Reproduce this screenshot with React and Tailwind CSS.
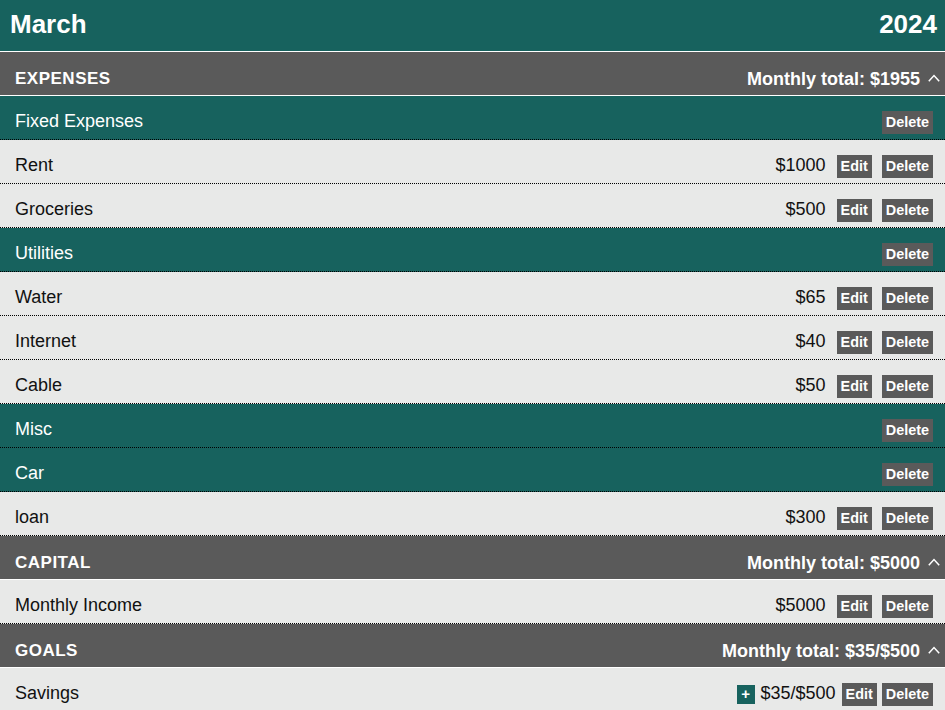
import React from 'react';

const font = "font-['Liberation_Sans',Arial,sans-serif]";

const expenses = [
  { name: 'Fixed Expenses', items: [{ name: 'Rent', amount: '$1000' }, { name: 'Groceries', amount: '$500' }] },
  {
    name: 'Utilities',
    items: [
      { name: 'Water', amount: '$65' },
      { name: 'Internet', amount: '$40' },
      { name: 'Cable', amount: '$50' },
    ],
  },
  { name: 'Misc', items: [] },
  { name: 'Car', items: [{ name: 'loan', amount: '$300' }] },
];

const Btn = ({ children }) => (
  <button className="bg-[#5a5a5a] text-white font-bold text-[14.4px] leading-[17px] px-1 pt-[3px] pb-[3px]">
    {children}
  </button>
);

const Chevron = () => (
  <svg width="12" height="8" viewBox="0 0 12 8" className="ml-[8px] mb-[4px]">
    <polyline points="0.8,7.2 6,1.5 11.2,7.2" fill="none" stroke="white" strokeWidth="1.5" />
  </svg>
);

const SectionHeader = ({ title, total }) => (
  <div className="flex justify-between items-baseline bg-[#5a5a5a] h-[44px] border-b border-white pl-[15px] pr-[5px] pt-[14px] text-white">
    <span className="font-bold text-[17px] tracking-[0.5px]">{title}</span>
    <span className="flex items-center font-bold text-[18px] leading-[21px] translate-y-[1px]">
      <span>Monthly total: {total}</span>
      <Chevron />
    </span>
  </div>
);

const GroupRow = ({ name }) => (
  <div className="flex justify-between items-baseline bg-[#17625e] h-[44px] border-b border-dotted border-black pl-[15px] pr-[12px] pt-[12px] text-white">
    <span className="text-[18px]">{name}</span>
    <Btn>Delete</Btn>
  </div>
);

const ItemRow = ({ name, amount, goal }) => (
  <div className="flex justify-between items-baseline bg-[#e8e9e8] h-[44px] border-b border-dotted border-black pl-[15px] pr-[12px] pt-[12px] text-[#111]">
    <span className="text-[18px]">{name}</span>
    {goal ? (
      <span className="flex items-baseline">
        <span className="bg-[#17625e] text-white font-bold text-[15px] leading-[18px] w-[18px] pb-[1px] text-center mr-[6px]">+</span>
        <span className="text-[18px] mr-[6px]">{amount}</span>
        <span className="mr-[5px]"><Btn>Edit</Btn></span>
        <Btn>Delete</Btn>
      </span>
    ) : (
      <span className="flex items-baseline">
        <span className="text-[18px] mr-[11px]">{amount}</span>
        <span className="mr-[10px]"><Btn>Edit</Btn></span>
        <Btn>Delete</Btn>
      </span>
    )}
  </div>
);

export default function App() {
  return (
    <div className={`w-full min-h-screen bg-[#e8e9e8] ${font}`}>
      <div className="flex justify-between items-center bg-[#17625e] h-[52px] border-b border-white pl-[10px] pr-[8px] pb-[2px] text-white font-bold text-[26px]">
        <span>March</span>
        <span>2024</span>
      </div>

      <SectionHeader title="EXPENSES" total="$1955" />
      {expenses.map((group) => (
        <React.Fragment key={group.name}>
          <GroupRow name={group.name} />
          {group.items.map((item) => (
            <ItemRow key={item.name} name={item.name} amount={item.amount} />
          ))}
        </React.Fragment>
      ))}

      <SectionHeader title="CAPITAL" total="$5000" />
      <ItemRow name="Monthly Income" amount="$5000" />

      <SectionHeader title="GOALS" total="$35/$500" />
      <ItemRow name="Savings" amount="$35/$500" goal />
    </div>
  );
}
